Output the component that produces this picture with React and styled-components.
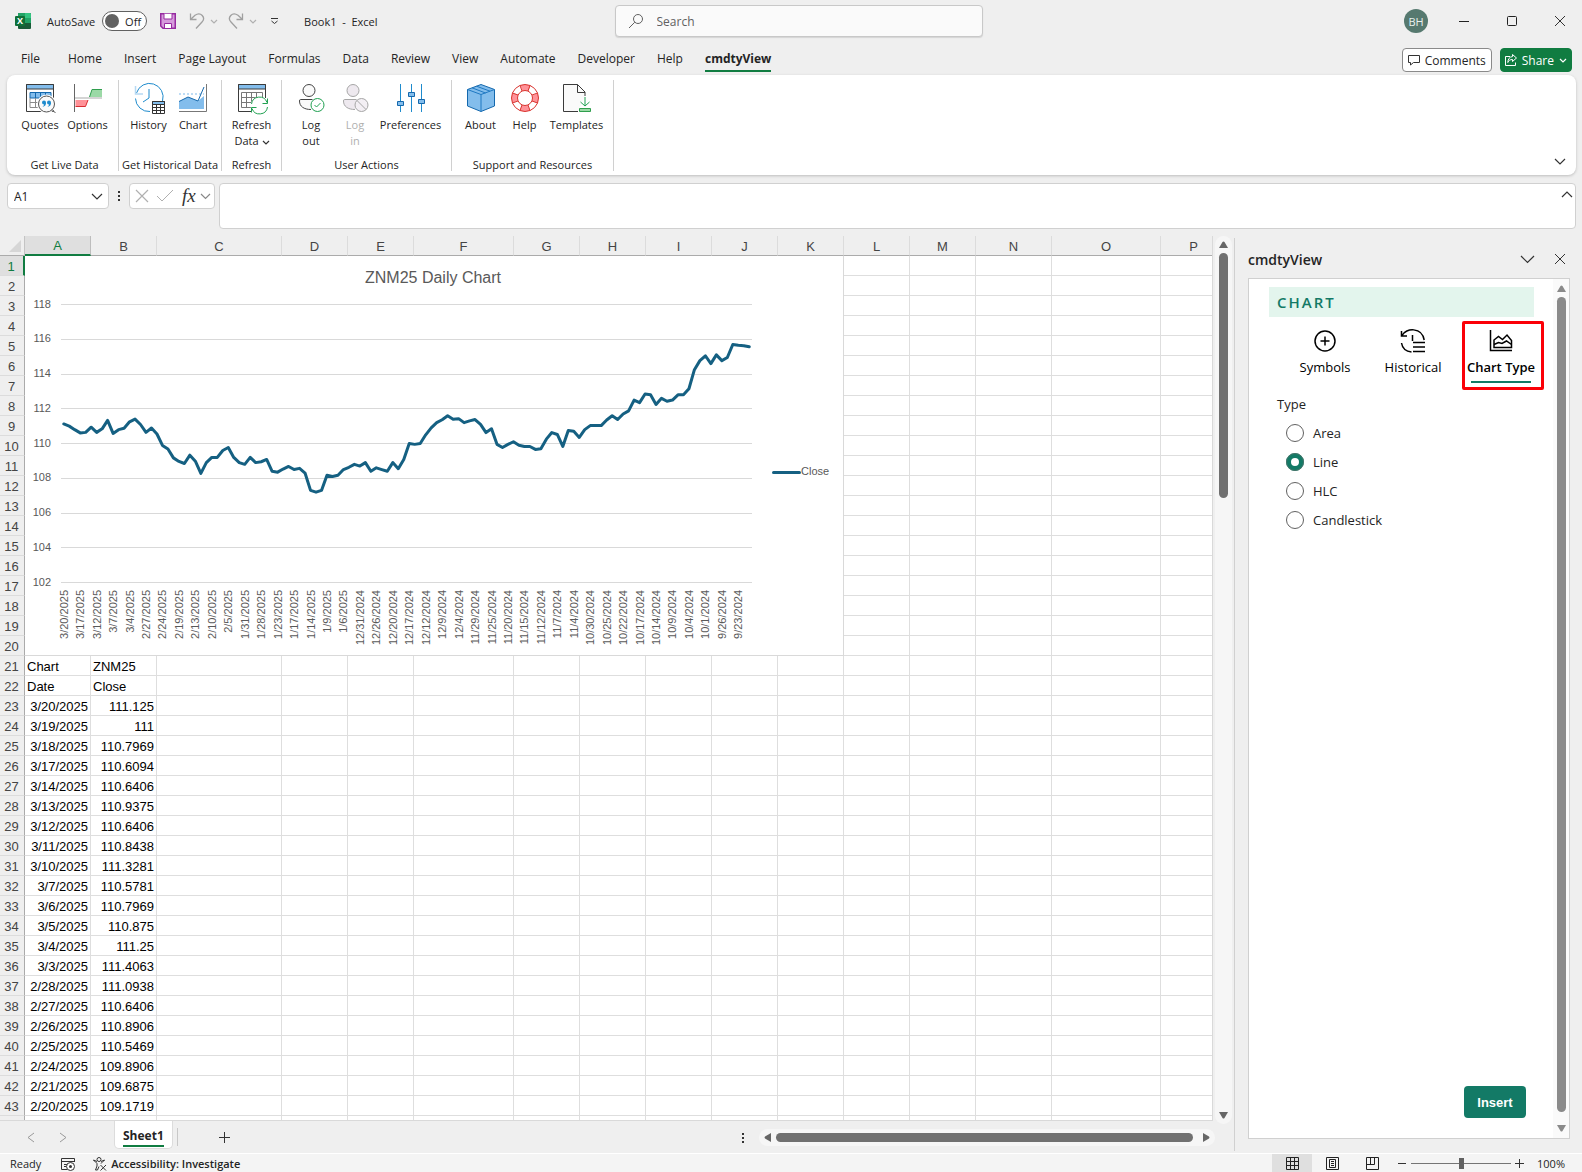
import React from 'react';
import styled, { createGlobalStyle } from 'styled-components';

const UI_FONT = '"Open Sans", "Noto Sans", sans-serif';
const SHEET_FONT = '"Liberation Sans", Arial, sans-serif';
const ACCENT = '#107c41';
const TEAL = '#137a66';

const GlobalStyle = createGlobalStyle`
	* {
		box-sizing: border-box;
	}
	body {
		margin: 0;
		background: #efefef;
		color: #242424;
		font-family: ${UI_FONT};
		font-size: 11px;
	}
	button, input, textarea {
		margin: 0;
		padding: 0;
		border: 0;
		background: none;
		color: inherit;
		font: inherit;
		outline: none;
	}
	svg {
		display: block;
		flex: none;
		overflow: visible;
	}
`;

const Window = styled.div`
	display: flex;
	flex-direction: column;
	height: 100vh;
	overflow: hidden;
`;

/* Title bar */
const TitleBar = styled.header`
	display: grid;
	grid-template-columns: 1fr 368px 1fr;
	align-items: center;
	height: 42px;
	padding-left: 15px;
`;

const TitleLeft = styled.div`
	display: flex;
	align-items: center;
`;

const TitleRight = styled.div`
	display: flex;
	align-items: center;
	justify-content: flex-end;
	gap: 4px;
`;

const IconButton = styled.button`
	display: flex;
	align-items: center;
	justify-content: center;
	flex: none;
	width: ${( { $width } ) => $width || 16}px;
	height: ${( { $height } ) => $height || 20}px;
	margin-right: ${( { $gap } ) => $gap || 0}px;
	background: ${( { $active } ) => ( $active ? '#dfdfdf' : 'none' )};
`;

const Logo = styled.svg`
	margin-right: 16px;
`;

const SwitchLabel = styled.label`
	margin-right: 7px;
`;

const Switch = styled.button`
	display: flex;
	align-items: center;
	justify-content: space-between;
	width: 45px;
	height: 20px;
	margin-right: 13px;
	padding: 0 5px 0 2px;
	border: 1px solid #616161;
	border-radius: 10px;
	background: #fff;
	&::before {
		content: '';
		width: 14px;
		height: 14px;
		border-radius: 50%;
		background: #616161;
	}
`;

const DocumentName = styled.span`
	white-space: pre;
`;

const SearchBox = styled.label`
	display: flex;
	align-items: center;
	gap: 14px;
	height: 32px;
	padding: 0 13px;
	border: 1px solid #c8c8c8;
	border-radius: 4px;
	background: #fafafa;
	box-shadow: 0 1px 1px #d4d4d4;
	input {
		flex: 1;
		min-width: 0;
		font-size: 12px;
	}
	input::placeholder {
		color: #616161;
		opacity: 1;
	}
`;

const Avatar = styled.span`
	display: flex;
	align-items: center;
	justify-content: center;
	width: 24px;
	height: 24px;
	margin-right: 10px;
	border-radius: 50%;
	background: #56796f;
	color: #e8f0ee;
	font-size: 11px;
`;

/* Ribbon tabs */
const TabRow = styled.div`
	display: flex;
	align-items: flex-end;
	justify-content: space-between;
	height: 33px;
	padding: 0 10px 3px;
`;

const TabList = styled.nav`
	display: flex;
	align-items: center;
`;

const RibbonTab = styled.button`
	display: flex;
	margin: 0 11px;
	padding: 4px 0 3px;
	border-bottom: 2px solid ${( { $active } ) => ( $active ? ACCENT : 'transparent' )};
	font-size: 12px;
	font-weight: ${( { $active } ) => ( $active ? 700 : 400 )};
	line-height: 16px;
	white-space: nowrap;
	&:first-child {
		margin-right: 17px;
	}
`;

const TabActions = styled.div`
	display: flex;
	gap: 8px;
`;

const ActionButton = styled.button`
	display: flex;
	align-items: center;
	gap: 5px;
	height: 24px;
	padding: 0 ${( { $primary } ) => ( $primary ? 4 : 5 )}px;
	border: 1px solid ${( { $primary } ) => ( $primary ? ACCENT : '#8a8a8a' )};
	border-radius: 4px;
	background: ${( { $primary } ) => ( $primary ? ACCENT : '#fff' )};
	color: ${( { $primary } ) => ( $primary ? '#fff' : 'inherit' )};
	font-size: 12px;
`;

/* Ribbon */
const Ribbon = styled.section`
	display: flex;
	align-items: flex-start;
	height: 100px;
	margin: 0 6px 0 7px;
	padding: 5px 8px 0 4px;
	border-radius: 8px;
	background: #fff;
	box-shadow: 0 1px 3px #bdbdbd;
	flex: none;
`;

const Group = styled.div`
	display: flex;
	flex-direction: column;
	justify-content: space-between;
	width: ${( { $width } ) => $width}px;
	height: 91px;
	border-right: 1px solid #d0d0d0;
`;

const GroupItems = styled.div`
	display: flex;
	justify-content: center;
`;

const GroupLabel = styled.span`
	line-height: 12px;
	text-align: center;
	white-space: nowrap;
`;

const Command = styled.button`
	display: flex;
	flex-direction: column;
	align-items: center;
	gap: 5px;
	width: ${( { $width } ) => $width}px;
	padding-top: 4px;
	line-height: 16px;
	white-space: pre-line;
	color: ${( { disabled } ) => ( disabled ? '#b0b0b0' : 'inherit' )};
	span {
		display: block;
	}
	span svg {
		display: inline-block;
		margin-left: 4px;
		vertical-align: middle;
	}
`;

const RibbonToggle = styled( IconButton )`
	margin-left: auto;
	align-self: flex-end;
	margin-bottom: 4px;
`;

/* Formula bar */
const FormulaRow = styled.div`
	display: flex;
	align-items: flex-start;
	height: 61px;
	padding: 8px 6px 0 7px;
	flex: none;
`;

const Field = styled.div`
	display: flex;
	align-items: center;
	justify-content: space-between;
	width: ${( { $width } ) => $width}px;
	height: 26px;
	padding: 0 ${( { $pad } ) => $pad}px;
	border: 1px solid #d0d0d0;
	border-radius: 4px;
	background: #fff;
	flex: none;
	input {
		width: 60px;
		font-size: 12px;
	}
`;

const FunctionField = styled( Field )`
	justify-content: flex-start;
	gap: 9px;
	padding-right: 2px;
`;

const Dots = styled.span`
	display: flex;
	flex-direction: column;
	align-items: center;
	gap: 2px;
	width: 20px;
	padding-top: ${( { $top } ) => $top || 0}px;
	&::before, &::after, i {
		content: '';
		width: 2px;
		height: 2px;
		background: #333;
	}
`;

const FxButton = styled.button`
	display: flex;
	align-items: center;
	gap: 5px;
	font: italic 400 19px/20px "Liberation Serif", serif;
	color: #333;
`;

const FormulaBox = styled.div`
	display: flex;
	flex: 1;
	height: 46px;
	margin-left: 4px;
	padding: 0 0 0 6px;
	border: 1px solid #d0d0d0;
	border-radius: 4px;
	background: #fff;
	textarea {
		flex: 1;
		resize: none;
	}
`;

/* Workbook */
const Main = styled.main`
	display: flex;
	flex: 1;
	min-height: 0;
`;

const Workbook = styled.div`
	display: flex;
	flex-direction: column;
	flex: 1;
	min-width: 0;
`;

const SheetArea = styled.div`
	display: flex;
	flex: 1;
	min-height: 0;
`;

const GridView = styled.div`
	position: relative;
	flex: 1;
	min-width: 0;
	overflow: hidden;
	border-right: 1px solid #d9d9d9;
	border-bottom: 1px solid #d9d9d9;
`;

const Grid = styled.table`
	width: 100%;
	min-width: 1227px;
	border-spacing: 0;
	table-layout: fixed;
	background: #fff;
	font-family: ${SHEET_FONT};
	font-size: 13px;
	line-height: 17px;
`;

const ColumnHead = styled.th`
	height: 20px;
	padding: 2px 0 0;
	border-right: 1px solid ${( { $selected } ) => ( $selected ? '#bdbdbd' : '#dcdcdc' )};
	border-bottom: ${( { $selected } ) => ( $selected ? `2px solid ${ACCENT}` : '1px solid #ababab' )};
	background: ${( { $selected } ) => ( $selected ? '#dfdfdf' : '#efefef' )};
	color: ${( { $selected } ) => ( $selected ? ACCENT : '#444' )};
	font-weight: 400;
	line-height: 16px;
`;

const Corner = styled.td`
	padding: 0 3px 0 0;
	border-right: 1px solid #c4c4c4;
	border-bottom: 1px solid #ababab;
	background: #efefef;
	svg {
		margin-left: auto;
	}
`;

const RowHead = styled.th`
	height: 20px;
	padding: 2px 1px 0 0;
	border-right: ${( { $selected } ) => ( $selected ? `2px solid ${ACCENT}` : '1px solid #ababab' )};
	border-bottom: 1px solid #dcdcdc;
	background: ${( { $selected } ) => ( $selected ? '#dfdfdf' : '#efefef' )};
	color: ${( { $selected } ) => ( $selected ? ACCENT : '#444' )};
	font-weight: 400;
`;

const Cell = styled.td`
	height: 20px;
	padding: 2px 2px 0;
	border-right: 1px solid #dedede;
	border-bottom: 1px solid #dedede;
	color: #000;
	text-align: ${( { $number } ) => ( $number ? 'right' : 'left' )};
	white-space: nowrap;
`;

/* The chart object floats over the cells A1:K20 */
const ChartObject = styled.figure`
	position: absolute;
	top: 20px;
	left: 25px;
	margin: 0;
	border-right: 1px solid #d9d9d9;
	border-bottom: 1px solid #d9d9d9;
	background: #fff;
	text {
		fill: #595959;
		font-family: ${SHEET_FONT};
		font-size: 11px;
	}
	text.title {
		font-size: 16px;
	}
`;

const Scrollbar = styled.div`
	display: flex;
	flex-direction: ${( { $vertical } ) => ( $vertical ? 'column' : 'row' )};
	align-items: center;
	border-radius: 9px;
	background: #f6f6f6;
`;

const SheetScroll = styled( Scrollbar )`
	width: 17px;
	margin: 0 2px -3px;
	padding: 5px 0;
	justify-content: space-between;
`;

const TabScroll = styled( Scrollbar )`
	width: 456px;
	height: 17px;
	margin-right: 19px;
	padding: 0 5px;
	gap: 5px;
`;

const ThumbTrack = styled.div`
	display: flex;
	flex-direction: column;
	flex: 1;
	margin: 5px 0;
`;

const Thumb = styled.div`
	flex: ${( { $grow } ) => $grow || 'none'};
	width: 9px;
	height: ${( { $height } ) => $height || 'auto'};
	border-radius: 5px;
	background: ${( { $light } ) => ( $light ? '#8a8a8a' : '#707070' )};
`;

const HorizontalThumb = styled.div`
	flex: 1;
	height: 9px;
	margin-right: 5px;
	border-radius: 5px;
	background: #707070;
`;

/* Sheet tabs */
const SheetBar = styled.div`
	display: flex;
	align-items: center;
	height: 32px;
	flex: none;
`;

const SheetNav = styled.div`
	display: flex;
	align-items: center;
	gap: 16px;
	width: 114px;
	padding-left: 23px;
`;

const SheetTab = styled.button`
	align-self: flex-start;
	height: 28px;
	padding: 4px 8px 0;
	border: 1px solid #dcdcdc;
	border-top: 0;
	border-radius: 0 0 5px 5px;
	background: #fff;
	font-size: 12px;
	font-weight: 700;
	line-height: 17px;
	span {
		display: block;
		padding-bottom: 1px;
		border-bottom: 2px solid ${ACCENT};
	}
`;

const TabDivider = styled.span`
	width: 1px;
	height: 18px;
	margin: 0 39px 0 4px;
	background: #c8c8c8;
`;

const Spacer = styled.span`
	flex: 1;
`;

/* Task pane */
const TaskPane = styled.aside`
	display: flex;
	flex-direction: column;
	width: 348px;
	margin: 2px 0;
	padding: 0 12px 12px 13px;
	border-left: 1px solid #d0d0d0;
	flex: none;
`;

const PaneHeader = styled.div`
	display: flex;
	align-items: center;
	height: 40px;
	padding: 2px 2px 0 0;
	flex: none;
	h2 {
		flex: 1;
		margin: 0;
		font-size: 14px;
		font-weight: 600;
	}
`;

const PaneBody = styled.div`
	display: flex;
	flex: 1;
	min-height: 0;
	border: 1px solid #d0d0d0;
	background: #fff;
`;

const PaneContent = styled.form`
	display: flex;
	flex-direction: column;
	flex: 1;
	min-width: 0;
	padding: 8px 19px 20px 20px;
	font-size: 13px;
`;

const PaneScroll = styled( Scrollbar )`
	width: 16px;
	padding: 6px 0;
	border-radius: 0;
	background: #fafafa;
	flex: none;
`;

const PaneTitle = styled.h3`
	margin: 0 0 4px;
	padding: 0 8px;
	background: #e3f5ed;
	color: ${TEAL};
	font-size: 15px;
	font-weight: 600;
	letter-spacing: 2px;
	line-height: 30px;
`;

const PaneTabs = styled.div`
	display: flex;
	margin: 0 0 5px 12px;
`;

const PaneTab = styled.button`
	position: relative;
	display: flex;
	flex: none;
	flex-direction: column;
	align-items: center;
	gap: 3px;
	width: 88px;
	height: 69px;
	padding-top: 8px;
	color: #000;
	font-size: 13px;
	font-weight: ${( { $active } ) => ( $active ? 600 : 400 )};
	line-height: 22px;
	white-space: nowrap;
	&::after {
		content: '';
		width: 60px;
		height: 2px;
		background: ${( { $active } ) => ( $active ? TEAL : 'transparent' )};
	}
`;

const Highlight = styled.span`
	position: absolute;
	inset: 0 1px 0 5px;
	border: 3px solid #fb0007;
	border-radius: 2px;
`;

const TypeField = styled.fieldset`
	min-width: 0;
	margin: 0;
	padding: 0 8px;
	border: 0;
	legend {
		padding: 0;
		margin-bottom: 5px;
		line-height: 18px;
	}
`;

const Choice = styled.label`
	display: flex;
	align-items: center;
	gap: 9px;
	height: 29px;
	padding-left: 9px;
	input {
		width: 18px;
		height: 18px;
		border: 1px solid #616161;
		border-radius: 50%;
		background: #fff;
		appearance: none;
	}
	input:checked {
		border: 5px solid ${TEAL};
		outline: 1px solid #49756b;
		outline-offset: -1px;
	}
`;

const InsertButton = styled.button`
	align-self: flex-end;
	width: 62px;
	height: 32px;
	margin: auto 8px 0 0;
	border-radius: 4px;
	background: ${TEAL};
	color: #fff;
	font-family: ${SHEET_FONT};
	font-size: 13px;
	font-weight: 700;
`;

/* Status bar */
const StatusBar = styled.footer`
	display: flex;
	align-items: center;
	height: 19px;
	padding: 0 17px 0 10px;
	border-top: 1px solid #fff;
	background: #f4f4f4;
	flex: none;
`;

const StatusItem = styled.span`
	display: flex;
	align-items: center;
	gap: 4px;
	margin-right: ${( { $gap } ) => $gap || 0}px;
	padding-top: 2px;
	font-weight: ${( { $strong } ) => ( $strong ? 600 : 400 )};
	line-height: 16px;
`;

const ZoomSlider = styled.input`
	width: 100px;
	height: 11px;
	margin: 0;
	background: linear-gradient( #757575, #757575 ) center / 100% 1px no-repeat;
	appearance: none;
	&::-webkit-slider-thumb {
		width: 5px;
		height: 11px;
		background: #616161;
		appearance: none;
	}
`;

const Chevron = ( { size = 7, color = '#333', up = false } ) => (
	<svg width={size} height={size / 2} viewBox='0 0 10 5' fill='none' stroke={color} strokeWidth={12 / size}>
		<path d={up ? 'M0 5L5 0L10 5' : 'M0 0L5 5L10 0'} />
	</svg>
);

const Cross = ( { size = 10, color = '#333' } ) => (
	<svg width={size} height={size} viewBox='0 0 10 10' stroke={color} strokeWidth='1'>
		<path d='M0 0L10 10M10 0L0 10' />
	</svg>
);

const Arrow = ( { dir, light } ) => {
	const paths = {
		up: 'M0 7L3.5 1Q4.5 0 5.5 1L9 7Z',
		down: 'M0 0L3.5 6Q4.5 7 5.5 6L9 0Z',
		left: 'M7 0L1 3.5Q0 4.5 1 5.5L7 9Z',
		right: 'M0 0L6 3.5Q7 4.5 6 5.5L0 9Z'
	};
	const side = dir === 'left' || dir === 'right';

	return (
		<svg width={side ? 7 : 9} height={side ? 9 : 7} fill={light ? '#8a8a8a' : '#666'}>
			<path d={paths[dir]} />
		</svg>
	);
};

const Icon = ( { size = 28, children } ) => (
	<svg width={size} height={size} viewBox={`0 0 ${size} ${size}`} fill='none'>
		{children}
	</svg>
);

const QuotesIcon = () => (
	<Icon>
		<path d='M.5 .5H27.5V27.5H.5Z' fill='#fff' stroke='#3b3b3b' />
		<path d='M.5 .5H27.5V5H.5Z' fill='#83bdec' stroke='#3b3b3b' />
		<path d='M4 8.5H25V14H4Z' fill='#83bdec' stroke='#1468ad' />
		<path d='M9.5 8V14M14.5 8V14M19.5 8V14' stroke='#1468ad' />
		<path d='M4 14V23.500H13M9.500 14V24M4 18.500H13' stroke='#8a8a8a' />
		<circle cx='20.500' cy='20' r='8.500' fill='#fafafa' stroke='#fff' strokeWidth='2' />
		<circle cx='20.500' cy='20' r='8' fill='#fafafa' stroke='#555' />
		<path d='M26 25.500L29.500 29' stroke='#555' />
		<g fill='#1e8bcd'>
			<circle cx='18' cy='18.500' r='2' />
			<path d='M20 18.500Q20.300 22 16.500 23Q18.300 21.500 18 20Z' />
			<circle cx='23' cy='18.500' r='2' />
			<path d='M25 18.500Q25.300 22 21.500 23Q23.300 21.500 23 20Z' />
		</g>
	</Icon>
);

const OptionsIcon = () => (
	<Icon>
		<path d='M1.5 16H14L11.500 22.500H1.500Z' fill='#ff9298' />
		<path d='M14 16L11.500 22.500H1.500' stroke='#d92c31' />
		<path d='M28 5.500H18L15.500 13H28Z' fill='#9bd9a6' />
		<path d='M28 5.500H18L15.500 13' stroke='#2f9e4d' />
		<path d='M1 14H28' stroke='#d4d4d4' strokeWidth='2' />
		<path d='M.5 0V28' stroke='#666' />
	</Icon>
);

const HistoryIcon = () => (
	<Icon>
		<path d='M1.500 9A13.500 13.500 0 0 1 27.500 17M.5 14.500A13.500 13.500 0 0 0 15 27.500' stroke='#1e8bcd' />
		<path d='M.5 2V10H8' stroke='#b7d9f3' strokeWidth='1.500' />
		<path d='M14 5V14L8 18' stroke='#1e8bcd' />
		<path d='M17.500 17.500H29.500V29.500H17.500Z' fill='#fff' stroke='#333' />
		<path d='M17.500 17.500H29.500V20.500H17.500Z' fill='#83bdec' stroke='#333' />
		<path d='M21.500 21V29M25.500 21V29M18 23.500H29M18 26.500H29' stroke='#333' />
	</Icon>
);

const ChartIcon = () => (
	<Icon>
		<path d='M0 17.500L9 13L19 17L25 12V25H0Z' fill='#83bdec' />
		<path d='M0 10H25' stroke='#a9d1f2' strokeWidth='1.500' strokeDasharray='2 2' />
		<path d='M0 17.500L9 13L19 17L25 3' stroke='#1468ad' />
		<path d='M27.500 0V27.500H0' stroke='#777' />
	</Icon>
);

const RefreshIcon = () => (
	<Icon>
		<path d='M13 27.500H.5V.5H27.500V14' fill='#fff' stroke='#3b3b3b' />
		<path d='M.5 .5H27.500V5H.5Z' fill='#83bdec' stroke='#3b3b3b' />
		<path d='M3.500 8.500H24.500M3.500 13.500H24.500M3.500 18.500H14M3.500 23.500H13M3.500 8.500V23.500M8.500 8.500V23.500M13.500 8.500V23.500M18.500 8.500V14M24.500 8.500V14' stroke='#777' />
		<circle cx='21.500' cy='21.500' r='9' fill='#fff' />
		<path d='M13.500 20A8 8 0 0 1 29 18.500M29.500 23A8 8 0 0 1 14 24.500' stroke='#21a152' />
		<path d='M29.500 14.500V19.500H24.500M13.500 28.500V23.500H18.500' stroke='#21a152' />
	</Icon>
);

const UserIcon = ( { stroke, fill, children } ) => (
	<Icon>
		<circle cx='12' cy='6.500' r='6' fill={fill} stroke={stroke} />
		<path d='M15.500 15.500H3.500Q2.500 15.500 2.500 17C2.500 22.500 7 25.500 14 25.500L18 17Z' fill={fill} />
		<path d='M15.500 15.500H3.500Q2.500 15.500 2.500 17C2.500 22.500 7 25.500 14 25.500' stroke={stroke} />
		{children}
	</Icon>
);

const LogoutIcon = () => (
	<UserIcon stroke='#444' fill='#fafafa'>
		<circle cx='20.500' cy='21' r='6.500' fill='#fff' stroke='#21a152' />
		<path d='M17.500 21L19.500 23L23.500 19' stroke='#21a152' />
	</UserIcon>
);

const LoginIcon = () => (
	<UserIcon stroke='#a6a6a6' fill='#eee9ef'>
		<circle cx='20.500' cy='21' r='6.500' fill='#f3eff4' stroke='#a6a6a6' />
		<path d='M16 16.500L25 25.500' stroke='#a6a6a6' />
	</UserIcon>
);

const PreferencesIcon = () => (
	<Icon>
		<path d='M3.500 0V28M14.500 0V28M24.500 0V28' stroke='#1e8bcd' />
		<path d='M.5 17.500H6.500V21.500H.5ZM11.500 8.500H17.500V12.500H11.500ZM21.500 15.500H27.500V19.500H21.500Z' fill='#83bdec' stroke='#1468ad' />
	</Icon>
);

const AboutIcon = () => (
	<Icon>
		<path d='M14 .5L27.500 5.500V22L14 27.500L.5 22V5.500Z' fill='#83bdec' stroke='#1468ad' />
		<path d='M.5 5.500L14 10.500L27.500 5.500M14 10.500V27.500M5 3.800L18.500 9M9.500 2.200L23 7.200' stroke='#1e78c2' />
	</Icon>
);

const HelpIcon = () => (
	<Icon>
		<circle cx='14' cy='14' r='10.500' stroke='#fff' strokeWidth='6' />
		<circle cx='14' cy='14' r='10.500' stroke='#ff9298' strokeWidth='6' strokeDasharray='8.250 8.250' strokeDashoffset='4.120' />
		<circle cx='14' cy='14' r='13.500' stroke='#d9342f' />
		<circle cx='14' cy='14' r='7.500' stroke='#d9342f' />
		<path d='M9 1.500L11 7M19 1.500L17 7M9 26.500L11 21M19 26.500L17 21M1.500 9L7 11M1.500 19L7 17M26.500 9L21 11M26.500 19L21 17' stroke='#d9342f' />
	</Icon>
);

const TemplatesIcon = () => (
	<Icon>
		<path d='M15 27.500H.5V.5H14.500L22 8V12' fill='#fafafa' stroke='#3b3b3b' />
		<path d='M14.500 .5V8.500H22' stroke='#3b3b3b' />
		<path d='M22 13V22M17.500 18L22 22L26.500 18' stroke='#21a152' />
		<path d='M16.500 24.500H27.500V27.500H16.500Z' fill='#9bd9a6' stroke='#2f9e4d' />
	</Icon>
);

const groups = [
	{
		label: 'Get Live Data',
		width: 108,
		items: [
			{ label: 'Quotes', width: 46, icon: <QuotesIcon /> },
			{ label: 'Options', width: 49, icon: <OptionsIcon /> }
		]
	},
	{
		label: 'Get Historical Data',
		width: 103,
		items: [
			{ label: 'History', width: 46, icon: <HistoryIcon /> },
			{ label: 'Chart', width: 43, icon: <ChartIcon /> }
		]
	},
	{
		label: 'Refresh',
		width: 60,
		items: [ { label: 'Refresh\nData', width: 48, icon: <RefreshIcon />, menu: true } ]
	},
	{
		label: 'User Actions',
		width: 170,
		items: [
			{ label: 'Log\nout', width: 44, icon: <LogoutIcon /> },
			{ label: 'Log\nin', width: 44, icon: <LoginIcon />, disabled: true },
			{ label: 'Preferences', width: 67, icon: <PreferencesIcon /> }
		]
	},
	{
		label: 'Support and Resources',
		width: 162,
		items: [
			{ label: 'About', width: 45, icon: <AboutIcon /> },
			{ label: 'Help', width: 43, icon: <HelpIcon /> },
			{ label: 'Templates', width: 61, icon: <TemplatesIcon /> }
		]
	}
];

const tabs = [
	'File', 'Home', 'Insert', 'Page Layout', 'Formulas', 'Data', 'Review',
	'View', 'Automate', 'Developer', 'Help', 'cmdtyView'
];

const columns = [
	[ 'A', 66 ], [ 'B', 66 ], [ 'C', 125 ], [ 'D', 66 ], [ 'E', 66 ], [ 'F', 100 ],
	[ 'G', 66 ], [ 'H', 66 ], [ 'I', 66 ], [ 'J', 66 ], [ 'K', 66 ], [ 'L', 66 ],
	[ 'M', 66 ], [ 'N', 76 ], [ 'O', 109 ], [ 'P' ]
];

const cells = {
	21: [ 'Chart', 'ZNM25' ],
	22: [ 'Date', 'Close' ],
	23: [ '3/20/2025', 111.125 ],
	24: [ '3/19/2025', 111 ],
	25: [ '3/18/2025', 110.7969 ],
	26: [ '3/17/2025', 110.6094 ],
	27: [ '3/14/2025', 110.6406 ],
	28: [ '3/13/2025', 110.9375 ],
	29: [ '3/12/2025', 110.6406 ],
	30: [ '3/11/2025', 110.8438 ],
	31: [ '3/10/2025', 111.3281 ],
	32: [ '3/7/2025', 110.5781 ],
	33: [ '3/6/2025', 110.7969 ],
	34: [ '3/5/2025', 110.875 ],
	35: [ '3/4/2025', 111.25 ],
	36: [ '3/3/2025', 111.4063 ],
	37: [ '2/28/2025', 111.0938 ],
	38: [ '2/27/2025', 110.6406 ],
	39: [ '2/26/2025', 110.8906 ],
	40: [ '2/25/2025', 110.5469 ],
	41: [ '2/24/2025', 109.8906 ],
	42: [ '2/21/2025', 109.6875 ],
	43: [ '2/20/2025', 109.1719 ]
};

const closes = [
	111.125, 111, 110.7969, 110.6094, 110.6406, 110.9375, 110.6406, 110.8438, 111.3281, 110.5781,
	110.7969, 110.875, 111.25, 111.4063, 111.0938, 110.6406, 110.8906, 110.5469, 109.8906, 109.6875,
	109.1719, 108.97, 108.85, 109.33, 108.98, 108.28, 108.9, 109.2, 109.2, 109.6,
	109.77, 109.2, 108.9, 108.8, 109.2, 108.9, 108.95, 109.08, 108.4, 108.35,
	108.53, 108.68, 108.5, 108.57, 108.3, 107.3, 107.2, 107.3, 108.17, 108.1,
	108.17, 108.5, 108.63, 108.8, 108.7, 108.9, 108.4, 108.6, 108.5, 108.4,
	108.9, 108.55, 109.08, 110, 109.95, 110, 110.5, 110.9, 111.2, 111.37,
	111.6, 111.4, 111.43, 111.2, 111.3, 111.38, 111.1, 110.63, 110.85, 109.95,
	109.77, 109.95, 110.1, 109.9, 109.83, 109.83, 109.66, 109.7, 110.25, 110.63,
	110.52, 109.83, 110.75, 110.7, 110.35, 110.8, 111.03, 111.03, 111.03, 111.35,
	111.6, 111.38, 111.7, 111.88, 112.5, 112.35, 112.85, 112.8, 112.25, 112.6,
	112.43, 112.5, 112.8, 112.8, 113.15, 114.25, 114.77, 115.05, 114.6, 115.1,
	114.77, 114.95, 115.7, 115.65, 115.63, 115.57
];

// every third trading day is labelled
const axisDates = [
	'3/20/2025', '3/17/2025', '3/12/2025', '3/7/2025', '3/4/2025', '2/27/2025', '2/24/2025',
	'2/19/2025', '2/13/2025', '2/10/2025', '2/5/2025', '1/31/2025', '1/28/2025', '1/23/2025',
	'1/17/2025', '1/14/2025', '1/9/2025', '1/6/2025', '12/31/2024', '12/26/2024', '12/20/2024',
	'12/17/2024', '12/12/2024', '12/9/2024', '12/4/2024', '11/29/2024', '11/25/2024', '11/20/2024',
	'11/15/2024', '11/12/2024', '11/7/2024', '11/4/2024', '10/30/2024', '10/25/2024', '10/22/2024',
	'10/17/2024', '10/14/2024', '10/9/2024', '10/4/2024', '10/1/2024', '9/26/2024', '9/23/2024'
];

const PLOT = { left: 36, right: 727, top: 48.5, bottom: 326.5 };
const plotX = ( index ) => PLOT.left + ( PLOT.right - PLOT.left ) * ( index + 0.5 ) / closes.length;
const plotY = ( value ) => PLOT.top + ( 118 - value ) * ( PLOT.bottom - PLOT.top ) / 16;

const PriceChart = () => (
	<ChartObject aria-label='ZNM25 Daily Chart'>
		<svg width='818' height='399'>
			<text className='title' x='408' y='27' textAnchor='middle'>ZNM25 Daily Chart</text>
			{[ 118, 116, 114, 112, 110, 108, 106, 104, 102 ].map( ( value ) => (
				<g key={value}>
					<path
						d={`M${PLOT.left} ${Math.floor( plotY( value ) ) + 0.5}H${PLOT.right}`}
						stroke='#d9d9d9'
					/>
					<text x='26' y={Math.round( plotY( value ) ) + 3} textAnchor='end'>{value}</text>
				</g>
			) )}
			{axisDates.map( ( date, index ) => (
				<text
					key={date}
					transform={`translate(${plotX( index * 3 ) + 4} 334) rotate(-90)`}
					textAnchor='end'
				>
					{date}
				</text>
			) )}
			<polyline
				points={closes.map( ( value, index ) => `${plotX( index )},${plotY( value )}` ).join( ' ' )}
				fill='none'
				stroke='#156082'
				strokeWidth='3'
				strokeLinecap='round'
				strokeLinejoin='round'
			/>
			<path d='M748.500 216.500H774.500' stroke='#156082' strokeWidth='3' strokeLinecap='round' />
			<text x='776' y='219'>Close</text>
		</svg>
	</ChartObject>
);

const rows = Array.from( { length: 43 }, ( _, index ) => index + 1 );

const Sheet = () => (
	<GridView>
		<Grid>
			<colgroup>
				<col width='25' />
				{columns.map( ( [ name, width ] ) => <col key={name} width={width} /> )}
			</colgroup>
			<thead>
				<tr>
					<Corner>
						<svg width='12' height='12' fill='#d6d6d6'><path d='M12 0V12H0Z' /></svg>
					</Corner>
					{columns.map( ( [ name ] ) => (
						<ColumnHead key={name} scope='col' $selected={name === 'A'}>{name}</ColumnHead>
					) )}
				</tr>
			</thead>
			<tbody>
				{rows.map( ( row ) => (
					<tr key={row}>
						<RowHead scope='row' $selected={row === 1}>{row}</RowHead>
						{columns.map( ( [ name ], index ) => (
							<Cell key={name} $number={row > 22}>{cells[row] && cells[row][index]}</Cell>
						) )}
					</tr>
				) )}
				<tr>
					<RowHead />
					{columns.map( ( [ name ] ) => <Cell key={name} /> )}
				</tr>
			</tbody>
		</Grid>
		<PriceChart />
	</GridView>
);

const Title = () => (
	<TitleBar>
		<TitleLeft>
			<Logo width='16' height='16'>
				<rect x='3' width='13' height='16' rx='1' fill='#185c37' />
				<path d='M4 0H10V8H3V1Q3 0 4 0Z' fill='#21a366' />
				<path d='M10 0H15Q16 0 16 1V5H10Z' fill='#33c481' />
				<path d='M10 5H16V10H10Z' fill='#21a366' />
				<path d='M3 5H10V11H3Z' fill='#107c41' />
				<rect y='3' width='10' height='10' rx='1' fill='#0f7038' />
				<text x='5' y='11' fill='#fff' fontSize='9' fontWeight='700' textAnchor='middle'>X</text>
			</Logo>
			<SwitchLabel htmlFor='autosave'>AutoSave</SwitchLabel>
			<Switch id='autosave' role='switch' aria-checked='false'>Off</Switch>
			<IconButton $gap={13} aria-label='Save'>
				<Icon size={16}>
					<path d='M.75 .75H15.250V15.250H3L.75 13Z' fill='#d69bdc' stroke='#962aa0' strokeWidth='1.500' />
					<path d='M4 .75V6H12V.75' fill='#fff' stroke='#962aa0' />
					<path d='M4.500 15V10.500H11.500V15' fill='#fff' stroke='#962aa0' />
				</Icon>
			</IconButton>
			<IconButton $gap={5} aria-label='Undo'>
				<Icon size={16}>
					<path d='M1.500 .5V6.500H7.500M1.500 6.500L6 2.300C12 -2 17 5 13 9L7 15.500' stroke='#a0a0a0' strokeWidth='1.300' />
				</Icon>
			</IconButton>
			<IconButton $width={7} $gap={11} aria-label='Undo list'><Chevron size={6} color='#b0b0b0' /></IconButton>
			<IconButton $gap={5} aria-label='Redo'>
				<Icon size={16}>
					<path d='M14.500 .5V6.500H8.500M14.500 6.500L10 2.300C4 -2 -1 5 3 9L9 15.500' stroke='#a0a0a0' strokeWidth='1.300' />
				</Icon>
			</IconButton>
			<IconButton $width={7} $gap={14} aria-label='Redo list'><Chevron size={6} color='#b0b0b0' /></IconButton>
			<IconButton $width={8} $gap={26} aria-label='Customize toolbar'>
				<svg width='7' height='6' fill='none' stroke='#333'>
					<path d='M0 .5H7M.5 3L3.500 5.500L6.500 3' />
				</svg>
			</IconButton>
			<DocumentName>{'Book1  -  Excel'}</DocumentName>
		</TitleLeft>
		<SearchBox>
			<Icon size={14}>
				<circle cx='9' cy='5' r='4.500' stroke='#616161' />
				<path d='M5.800 8.200L0 14' stroke='#616161' />
			</Icon>
			<input type='text' placeholder='Search' aria-label='Search' />
		</SearchBox>
		<TitleRight>
			<Avatar>BH</Avatar>
			<IconButton $width={44} aria-label='Minimize'>
				<svg width='10' height='1'><rect width='10' height='1' fill='#222' /></svg>
			</IconButton>
			<IconButton $width={44} aria-label='Maximize'>
				<Icon size={10}><rect x='.5' y='.5' width='9' height='9' rx='1' stroke='#222' /></Icon>
			</IconButton>
			<IconButton $width={44} aria-label='Close'><Cross /></IconButton>
		</TitleRight>
	</TitleBar>
);

const Tabs = () => (
	<TabRow>
		<TabList>
			{tabs.map( ( tab ) => (
				<RibbonTab key={tab} $active={tab === 'cmdtyView'}>{tab}</RibbonTab>
			) )}
		</TabList>
		<TabActions>
			<ActionButton>
				<Icon size={12}>
					<path d='M.5 1.500H11.500V8.500H5.500L2.500 11V8.500H.5Z' stroke='#333' />
				</Icon>
				Comments
			</ActionButton>
			<ActionButton $primary>
				<Icon size={12}>
					<path d='M5 2.500H.5V11.500H10.500V8.500' stroke='#fff' />
					<path d='M7.500 .5L11.500 4L7.500 7.500V5.500C5 5.500 3.800 6.500 2.800 8.500C3 5 4.500 2.800 7.500 2.600Z' stroke='#fff' />
				</Icon>
				Share
				<IconButton as='span' $width={8}><Chevron size={6} color='#fff' /></IconButton>
			</ActionButton>
		</TabActions>
	</TabRow>
);

const RibbonBar = () => (
	<Ribbon>
		{groups.map( ( group ) => (
			<Group key={group.label} $width={group.width}>
				<GroupItems>
					{group.items.map( ( item ) => (
						<Command key={item.label} $width={item.width} disabled={item.disabled}>
							{item.icon}
							<span>{item.label}{item.menu && <Chevron size={6} />}</span>
						</Command>
					) )}
				</GroupItems>
				<GroupLabel>{group.label}</GroupLabel>
			</Group>
		) )}
		<RibbonToggle aria-label='Collapse ribbon'><Chevron size={10} /></RibbonToggle>
	</Ribbon>
);

const FormulaBar = () => (
	<FormulaRow>
		<Field $width={102} $pad={6}>
			<input type='text' defaultValue='A1' aria-label='Name box' />
			<Chevron size={10} />
		</Field>
		<Dots $top={8}><i /></Dots>
		<FunctionField $width={86} $pad={6}>
			<IconButton $width={12} aria-label='Cancel'><Cross size={12} color='#b0b0b0' /></IconButton>
			<IconButton aria-label='Enter'>
				<svg width='16' height='12' fill='none' stroke='#b0b0b0'><path d='M0 6L5 11L16 0' /></svg>
			</IconButton>
			<FxButton aria-label='Insert function'>
				fx
				<Chevron size={9} color='#888' />
			</FxButton>
		</FunctionField>
		<FormulaBox>
			<textarea aria-label='Formula bar' />
			<IconButton aria-label='Collapse formula bar'><Chevron size={10} up /></IconButton>
		</FormulaBox>
	</FormulaRow>
);

const SheetTabs = () => (
	<SheetBar>
		<SheetNav>
			<IconButton aria-label='Previous sheet'>
				<svg width='6' height='9' fill='none' stroke='#999'><path d='M6 0L0 4.500L6 9' /></svg>
			</IconButton>
			<IconButton aria-label='Next sheet'>
				<svg width='6' height='9' fill='none' stroke='#999'><path d='M0 0L6 4.500L0 9' /></svg>
			</IconButton>
		</SheetNav>
		<SheetTab><span>Sheet1</span></SheetTab>
		<TabDivider />
		<IconButton aria-label='New sheet'>
			<Icon size={11}><path d='M5.500 0V11M0 5.500H11' stroke='#333' /></Icon>
		</IconButton>
		<Spacer />
		<Dots $top={2}><i /></Dots>
		<IconButton as='span' $width={6} />
		<TabScroll>
			<Arrow dir='left' />
			<HorizontalThumb />
			<Arrow dir='right' />
		</TabScroll>
	</SheetBar>
);

const Pane = () => (
	<TaskPane>
		<PaneHeader>
			<h2>cmdtyView</h2>
			<IconButton $gap={17} aria-label='Task pane options'><Chevron size={13} /></IconButton>
			<IconButton aria-label='Close pane'><Cross /></IconButton>
		</PaneHeader>
		<PaneBody>
			<PaneContent onSubmit={( event ) => event.preventDefault()}>
				<PaneTitle>CHART</PaneTitle>
				<PaneTabs>
					<PaneTab type='button'>
						<Icon size={24}>
							<circle cx='12' cy='12' r='10' stroke='#000' strokeWidth='1.500' />
							<path d='M12 7.500V16.500M7.500 12H16.500' stroke='#000' strokeWidth='1.500' />
						</Icon>
						Symbols
					</PaneTab>
					<PaneTab type='button'>
						<Icon size={24}>
							<path d='M.5 2V7H6M1 6.500C5 -1.500 21 -2 23.200 11M.5 14C1.500 20 5 22.500 10.500 23' stroke='#000' strokeWidth='1.500' />
							<path d='M11.500 6V12M12 13.500H24M12 18H24M12 22.500H24' stroke='#000' strokeWidth='1.500' />
						</Icon>
						Historical
					</PaneTab>
					<PaneTab type='button' $active>
						<Icon size={24}>
							<path d='M1.500 1V21.500H23' stroke='#000' strokeWidth='1.500' />
							<path d='M5 18.500V11L9.500 7.500L13.500 10.500L18 6L22.500 11.500V18.500Z' stroke='#000' strokeWidth='1.500' />
							<path d='M5 15.500L9.500 13.500L13 14.500L17.500 12L22.500 15.500' stroke='#000' strokeWidth='1.500' />
						</Icon>
						Chart Type
						<Highlight />
					</PaneTab>
				</PaneTabs>
				<TypeField>
					<legend>Type</legend>
					{[ 'Area', 'Line', 'HLC', 'Candlestick' ].map( ( type ) => (
						<Choice key={type}>
							<input type='radio' name='chart-type' defaultChecked={type === 'Line'} />
							{type}
						</Choice>
					) )}
				</TypeField>
				<InsertButton type='submit'>Insert</InsertButton>
			</PaneContent>
			<PaneScroll $vertical>
				<Arrow dir='up' light />
				<ThumbTrack><Thumb $grow='1' $light /></ThumbTrack>
				<IconButton as='span' $height={8} />
				<Arrow dir='down' light />
			</PaneScroll>
		</PaneBody>
	</TaskPane>
);

const Status = () => (
	<StatusBar>
		<StatusItem $gap={20}>Ready</StatusItem>
		<StatusItem $gap={18}>
			<Icon size={14}>
				<path d='M13.500 5V1.500H.5V12.500H6M.5 4.500H13.500M3 7.500H6M3 9.500H5' stroke='#333' />
				<circle cx='9.500' cy='9.500' r='4' fill='#fff' stroke='#333' />
				<circle cx='9.500' cy='9.500' r='1.500' fill='#333' />
			</Icon>
		</StatusItem>
		<StatusItem $strong>
			<Icon size={14}>
				<circle cx='6' cy='2.500' r='2' stroke='#333' />
				<path d='M.5 3C1 4.500 4 5.500 4 6.500V9L2.500 13H4.500L6 9.500M11.500 3C11 4.500 8 5.500 8 6.500M.5 3L4 4.500M11.500 3L8 4.500M7.500 8L13 13.500M13 8L7.500 13.500' stroke='#333' />
			</Icon>
			Accessibility: Investigate
		</StatusItem>
		<Spacer />
		<IconButton $width={40} $height={18} $active aria-label='Normal view'>
			<Icon size={13}><path d='M.5 .5H12.500V12.500H.5ZM4.500 0V13M8.500 0V13M0 4.500H13M0 8.500H13' stroke='#222' /></Icon>
		</IconButton>
		<IconButton $width={40} $height={18} aria-label='Page layout view'>
			<Icon size={13}><path d='M.5 .5H12.500V12.500H.5ZM3.500 2.500H9.500V10.500H3.500ZM5 4.500H8M5 6.500H8M5 8.500H8' stroke='#222' /></Icon>
		</IconButton>
		<IconButton $width={40} $height={18} $gap={6} aria-label='Page break preview'>
			<Icon size={13}><path d='M.5 .5H12.500V12.500H.5ZM4.500 0V7.500M8.500 0V7.500M.5 7.500H8.500' stroke='#222' /></Icon>
		</IconButton>
		<IconButton $width={8} $gap={5} aria-label='Zoom out'>
			<svg width='8' height='1'><rect width='8' height='1' fill='#333' /></svg>
		</IconButton>
		<ZoomSlider type='range' min='10' max='190' defaultValue='100' aria-label='Zoom' />
		<IconButton aria-label='Zoom in'>
			<Icon size={9}><path d='M4.500 0V9M0 4.500H9' stroke='#333' /></Icon>
		</IconButton>
		<IconButton as='span' $width={10} />
		<StatusItem>100%</StatusItem>
	</StatusBar>
);

const App = () => (
	<Window>
		<GlobalStyle />
		<Title />
		<Tabs />
		<RibbonBar />
		<FormulaBar />
		<Main>
			<Workbook>
				<SheetArea>
					<Sheet />
					<SheetScroll $vertical>
						<Arrow dir='up' />
						<ThumbTrack><Thumb $height='245px' /></ThumbTrack>
						<Arrow dir='down' />
					</SheetScroll>
				</SheetArea>
				<SheetTabs />
			</Workbook>
			<Pane />
		</Main>
		<Status />
	</Window>
);

export default App;
